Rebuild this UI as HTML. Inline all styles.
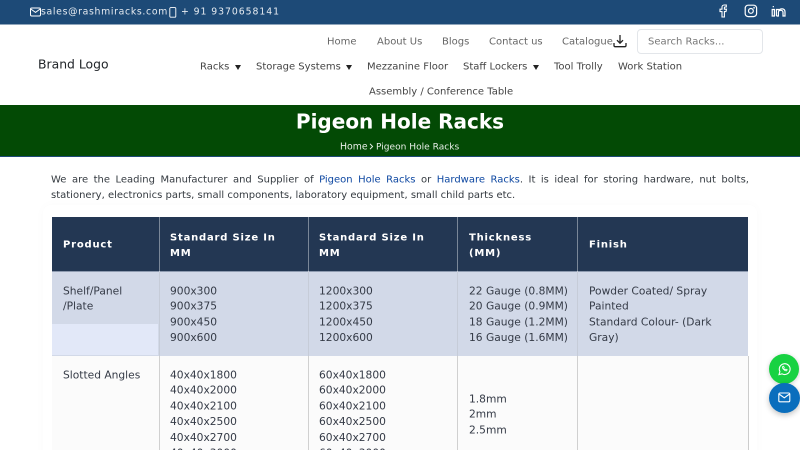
<!DOCTYPE html>
<html lang="en"><head><meta charset="utf-8"><title>Pigeon Hole Racks</title>
<style>
html,body{margin:0;padding:0;width:800px;height:450px;overflow:hidden;background:#fff}
body{font-family:"DejaVu Sans","Liberation Sans",sans-serif;position:relative}
.a{position:absolute;white-space:nowrap;line-height:24px;transform:scale(.66667);transform-origin:0 0}
.box{position:absolute}
.nav{font-size:15px;color:#666}
.nav2{font-size:15px;color:#444}
.top{font-size:14px;color:#e6ebf1;letter-spacing:1px}
.t{font-size:16px;color:#343a46;line-height:23.4px}
.h{font-size:15px;font-weight:700;color:#fff;line-height:23.4px;letter-spacing:1.2px}
.caret{position:absolute;width:0;height:0;border-left:3px solid transparent;border-right:3px solid transparent;border-top:5px solid #222}
svg{position:absolute;fill:none}
a{text-decoration:none;color:inherit}
</style></head><body>
<div class="box" style="left:0;top:0;width:800px;height:24px;background:#1d4a77"></div>
<div class="box" style="left:0;top:24px;width:800px;height:1px;background:#8fa5bb"></div>
<svg style="left:30px;top:7px" width="11" height="10" viewBox="0 0 11 10" stroke="#fff" stroke-width="1"><rect x=".5" y="1" width="10" height="8" rx="1.2"/><path d="M.8 2l4.7 3.4L10.2 2"/></svg>
<div class="a top" style="left:41px;top:4px">sales@rashmiracks.com</div>
<svg style="left:169px;top:7px" width="8" height="11" viewBox="0 0 8 11" stroke="#fff" stroke-width=".9"><rect x=".8" y=".6" width="6" height="9.6" rx="1"/></svg>
<div class="a top" style="left:181px;top:4px;letter-spacing:1.4px">+ 91 9370658141</div>
<svg style="left:717px;top:4px" width="12" height="14" viewBox="0 0 12 14" stroke="#fff" stroke-width="1.1"><path d="M8.8 1H7.2C5.8 1 5 2 5 3.2V5.2H3V7.6H5V13H7.4V7.6H9L9.5 5.2H7.4V3.6c0-.4.2-.6.6-.6H9.3V1z"/></svg>
<svg style="left:744px;top:4px" width="14" height="14" viewBox="0 0 14 14" stroke="#fff" stroke-width="1.2"><rect x="1.2" y="1.2" width="11.4" height="11.4" rx="3"/><circle cx="6.9" cy="6.9" r="2.4"/><circle cx="10.1" cy="3.7" r=".3"/></svg>
<svg style="left:771px;top:4px" width="15" height="14" viewBox="0 0 15 14" stroke="#fff" stroke-width="1.2"><path d="M1.2 5.5h2.2V12H1.2zM1.7 2.6h1.2"/><path d="M5.4 12V5.5h2v1"/><path d="M5.4 12h2V8.4c0-2.8 4.6-2.8 4.6 0V12h2V8c0-3.9-4.6-3.9-6.6-1.5"/></svg>

<div class="a" style="left:38px;top:56.7px;font-size:18.6px;color:#212529">Brand Logo</div>
<div class="a nav" style="left:327px;top:33px">Home</div>
<div class="a nav" style="left:377px;top:33px">About Us</div>
<div class="a nav" style="left:442px;top:33px">Blogs</div>
<div class="a nav" style="left:489px;top:33px">Contact us</div>
<div class="a nav" style="left:562px;top:33px">Catalogue</div>
<svg style="left:613px;top:34px" width="14" height="14" viewBox="0 0 14 14" stroke="#222" stroke-width="1.3"><path d="M7 1v8M4 6.2l3 3 3-3"/><path d="M1 9v2.5c0 .8.5 1.2 1.2 1.2h9.6c.7 0 1.2-.4 1.2-1.2V9"/></svg>
<div class="box" style="left:637px;top:29px;width:124px;height:23px;border:1px solid #e3e6ea;border-radius:4px;background:#fff"></div>
<div class="a" style="left:648px;top:33px;font-size:15px;color:#777">Search Racks...</div>

<div class="a nav2" style="left:200px;top:58px">Racks</div><div class="caret" style="left:235px;top:65px"></div>
<div class="a nav2" style="left:256px;top:58px">Storage Systems</div><div class="caret" style="left:346px;top:65px"></div>
<div class="a nav2" style="left:367px;top:58px">Mezzanine Floor</div>
<div class="a nav2" style="left:463px;top:58px">Staff Lockers</div><div class="caret" style="left:533px;top:65px"></div>
<div class="a nav2" style="left:554px;top:58px">Tool Trolly</div>
<div class="a nav2" style="left:618px;top:58px">Work Station</div>
<div class="a nav2" style="left:369px;top:83px">Assembly / Conference Table</div>

<div class="box" style="left:0;top:105px;width:800px;height:51px;background:#034a05"></div>
<div class="box" style="left:0;top:156px;width:800px;height:1px;background:#1d4a77"></div>
<div class="a" style="left:0;width:1200px;top:111px;line-height:33px;text-align:center;font-size:30px;font-weight:700;color:#fff">Pigeon Hole Racks</div>
<div class="a" style="left:340px;top:139px;font-size:14px;color:#e8efe8">Home</div>
<svg style="left:369px;top:143px" width="5" height="7" viewBox="0 0 5 7" stroke="#e8efe8" stroke-width="1"><path d="M1 .8L3.6 3.5 1 6.2"/></svg>
<div class="a" style="left:376px;top:139px;font-size:13.6px;color:#e8efe8">Pigeon Hole Racks</div>

<div class="a" style="left:51px;top:171.5px;width:1047px;white-space:normal;font-size:15px;line-height:22.8px;color:#343a40;text-align:justify">We are the Leading Manufacturer and Supplier of <a style="color:#0d47a1">Pigeon Hole Racks</a> or <a style="color:#0d47a1">Hardware Racks</a>. It is ideal for storing hardware, nut bolts, stationery, electronics parts, small components, laboratory equipment, small child parts etc.</div>

<div class="box" style="left:43px;top:205px;width:714px;height:260px;border-radius:8px;box-shadow:0 0 10px rgba(0,0,0,.025)"></div>
<div class="box" style="left:51.7px;top:217px;width:696.6px;height:54px;background:#233753"></div>
<div class="box" style="left:51.7px;top:271px;width:696.6px;height:85px;background:#d2d9e8"></div>
<div class="box" style="left:51.7px;top:324px;width:106.5px;height:31px;background:#e2e8f8"></div>
<div class="box" style="left:51.7px;top:356px;width:696.6px;height:94px;background:#fbfbfb"></div>
<div class="box" style="left:51.7px;top:270.5px;width:696.6px;height:1px;background:#8e9bb0"></div>
<div class="box" style="left:748px;top:356px;width:1px;height:94px;background:#ccc"></div>

<div class="box" style="left:158.7px;top:217px;width:1px;height:54px;background:#7a8798"></div>
<div class="box" style="left:308px;top:217px;width:1px;height:54px;background:#7a8798"></div>
<div class="box" style="left:457px;top:217px;width:1px;height:54px;background:#7a8798"></div>
<div class="box" style="left:577px;top:217px;width:1px;height:54px;background:#7a8798"></div>
<div class="box" style="left:158.7px;top:271px;width:1px;height:85px;background:#c6ccd8"></div>
<div class="box" style="left:308px;top:271px;width:1px;height:85px;background:#c6ccd8"></div>
<div class="box" style="left:457px;top:271px;width:1px;height:85px;background:#c6ccd8"></div>
<div class="box" style="left:577px;top:271px;width:1px;height:85px;background:#c6ccd8"></div>
<div class="box" style="left:158.7px;top:356px;width:1px;height:94px;background:#d0d0d0"></div>
<div class="box" style="left:308px;top:356px;width:1px;height:94px;background:#d0d0d0"></div>
<div class="box" style="left:457px;top:356px;width:1px;height:94px;background:#d0d0d0"></div>
<div class="box" style="left:577px;top:356px;width:1px;height:94px;background:#d0d0d0"></div>

<div class="a h" style="left:63px;top:236.6px">Product</div>
<div class="a h" style="left:170px;top:229.6px">Standard Size In<br>MM</div>
<div class="a h" style="left:319.3px;top:229.6px">Standard Size In<br>MM</div>
<div class="a h" style="left:469px;top:229.6px">Thickness<br>(MM)</div>
<div class="a h" style="left:589px;top:236.6px">Finish</div>

<div class="a t" style="left:63px;top:282.5px">Shelf/Panel<br>/Plate</div>
<div class="a t" style="left:170px;top:282.5px">900x300<br>900x375<br>900x450<br>900x600</div>
<div class="a t" style="left:319.3px;top:282.5px">1200x300<br>1200x375<br>1200x450<br>1200x600</div>
<div class="a t" style="left:469px;top:282.5px">22 Gauge (0.8MM)<br>20 Gauge (0.9MM)<br>18 Gauge (1.2MM)<br>16 Gauge (1.6MM)</div>
<div class="a t" style="left:589px;top:282.5px">Powder Coated/ Spray<br>Painted<br>Standard Colour- (Dark<br>Gray)</div>

<div class="a t" style="left:63px;top:367px">Slotted Angles</div>
<div class="a t" style="left:170px;top:367px">40x40x1800<br>40x40x2000<br>40x40x2100<br>40x40x2500<br>40x40x2700<br>40x40x3000</div>
<div class="a t" style="left:319.3px;top:367px">60x40x1800<br>60x40x2000<br>60x40x2100<br>60x40x2500<br>60x40x2700<br>60x40x3000</div>
<div class="a t" style="left:469px;top:390.5px">1.8mm<br>2mm<br>2.5mm</div>

<div class="box" style="left:769px;top:354px;width:30px;height:30px;border-radius:50%;background:#18d242;box-shadow:0 1px 5px rgba(0,0,0,.2)"></div>
<svg style="left:778px;top:362px" width="13" height="14" viewBox="0 0 13 14" stroke="#fff" stroke-width="1.1"><path d="M1 12.6l.9-3A5.4 5.4 0 1 1 4 11.8z"/><path d="M4.6 4.6c-.6 1.8 2 4.6 4 4.2l.6-1-1.3-.7-.6.6c-.7-.3-1.3-.9-1.6-1.6l.6-.6-.7-1.3z" stroke-width=".8"/></svg>
<div class="box" style="left:769px;top:383px;width:31px;height:30px;border-radius:50%;background:#0a6ebd;box-shadow:0 2px 6px rgba(0,0,0,.25)"></div>
<svg style="left:778px;top:392px" width="13" height="11" viewBox="0 0 13 11" stroke="#fff" stroke-width="1.1"><rect x=".8" y="1" width="11" height="8.8" rx="1.2"/><path d="M1 2l5.3 3.8L11.6 2"/></svg>
</body></html>
